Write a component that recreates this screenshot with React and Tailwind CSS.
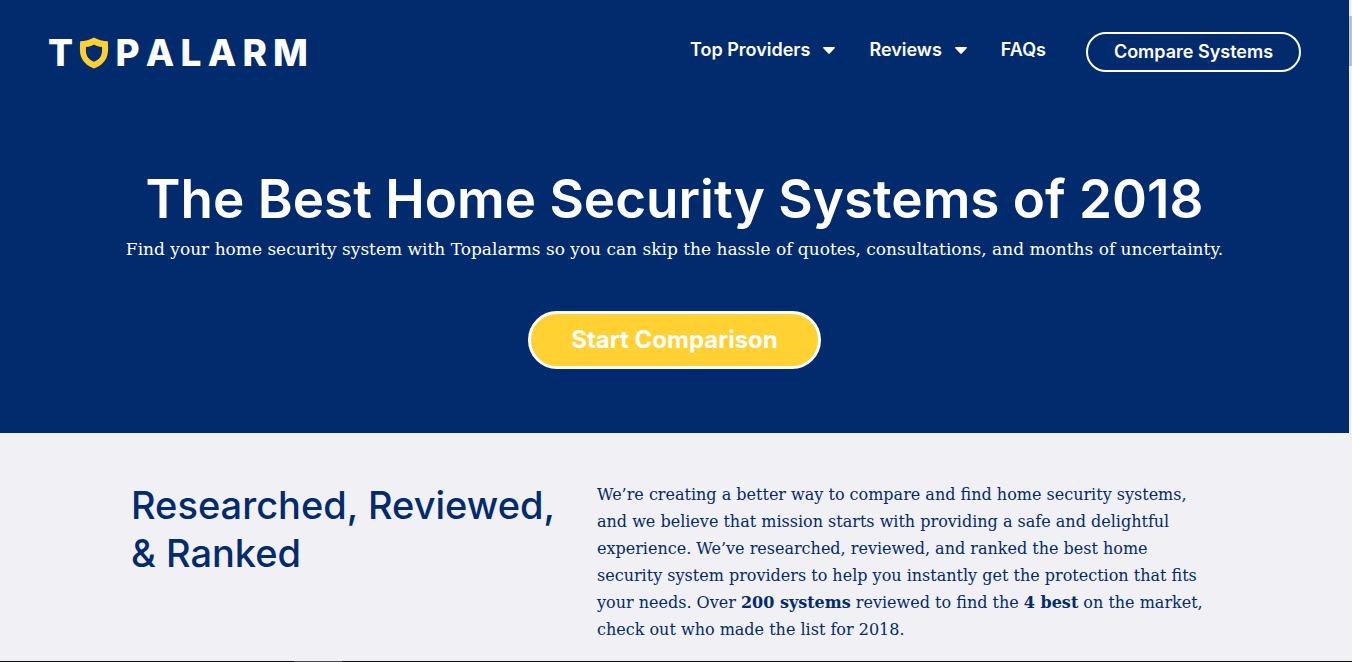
import React from "react";

const navLink =
  "flex items-center gap-[13px] text-[18px] leading-6 font-semibold text-white";

function Caret() {
  return (
    <svg width="12" height="7" viewBox="0 0 12 7" aria-hidden="true">
      <path d="M0.8 0h10.4c.7 0 1 .8.5 1.3L6.7 6.6c-.4.4-1 .4-1.4 0L.3 1.3C-.2.8.1 0 .8 0z" fill="#fff" />
    </svg>
  );
}

function Logo() {
  return (
    <a
      href="#"
      aria-label="Topalarm"
      className="flex w-[260px] items-center justify-between text-[37px] leading-8 font-extrabold text-white"
    >
      <span>T</span>
      <svg width="30" height="32" viewBox="0 0 30 32" aria-hidden="true">
        <path
          fill="#ffd033"
          fillRule="evenodd"
          d="M15 0.5C11 3 6 4 1.2 4.2C0.8 10 0.4 16 2.6 21C5 26 9.500 29.500 15 31.500C20.500 29.500 25 26 27.400 21C29.600 16 29.200 10 28.800 4.200C24 4 19 3 15 0.500ZM15 7.500C17.500 9 20 9.700 23 10C23.200 13.500 23.200 16.500 21.800 19.200C20.400 21.800 18 23.600 15 24.800C12 23.600 9.600 21.800 8.200 19.200C6.800 16.500 6.800 13.500 7 10C10 9.700 12.500 9 15 7.500Z"
        />
      </svg>
      <span>P</span>
      <span>A</span>
      <span>L</span>
      <span>A</span>
      <span>R</span>
      <span>M</span>
    </a>
  );
}

export default function App() {
  return (
    <div className="flex h-screen flex-col overflow-hidden bg-[#f1f0f5] font-[Inter,'Liberation_Sans',sans-serif]">
      <div className="flex min-h-0 grow">
        <div className="min-w-0 grow">
          <div className="bg-[#022b6d] pb-16 text-white">
            <header className="flex items-start justify-between px-12 pt-8">
              <div className="pt-[5px]">
                <Logo />
              </div>
              <nav className="flex items-start">
                <div className="flex gap-[34px] pt-[6px] pr-10">
                  <button className={navLink}>
                    Top Providers <Caret />
                  </button>
                  <button className={navLink}>
                    Reviews <Caret />
                  </button>
                  <a href="#" className={navLink}>
                    FAQs
                  </a>
                </div>
                <a
                  href="#"
                  className="flex h-10 w-[215px] items-center justify-center rounded-full border-2 border-white pb-0.5 text-[18px] font-semibold"
                >
                  Compare Systems
                </a>
              </nav>
            </header>
            <section className="flex flex-col items-center pt-24 text-center">
              <h1 className="text-[53px] leading-[63px] font-semibold whitespace-nowrap">
                The Best Home Security Systems of 2018
              </h1>
              <p className="pt-1 font-['DejaVu_Serif',serif] text-[17px] leading-7 whitespace-nowrap">
                Find your home security system with Topalarms so you can skip the hassle of quotes, consultations, and months of uncertainty.
              </p>
              <button className="mt-12 h-[58px] w-[293px] rounded-full border-3 border-white bg-[#ffd133] text-[24px] font-bold">
                Start Comparison
              </button>
            </section>
          </div>
          <section className="flex gap-9 px-[131px] pt-12 text-[#022b6d]">
            <h2 className="w-[430px] shrink-0 text-[38px] leading-12 font-medium">
              Researched, Reviewed, &amp; Ranked
            </h2>
            <p className="w-[640px] font-['DejaVu_Serif',serif] text-[16px] leading-[27px]">
              We’re creating a better way to compare and find home security systems,
              <br />
              and we believe that mission starts with providing a safe and delightful
              <br />
              experience. We’ve researched, reviewed, and ranked the best home
              <br />
              security system providers to help you instantly get the protection that fits
              <br />
              your needs. Over <b>200 systems</b> reviewed to find the <b>4 best</b> on the market,
              <br />
              check out who made the list for 2018.
            </p>
          </section>
        </div>
        <div className="w-[3px] shrink-0 bg-[#f1f1f1]">
          <div className="mt-4 h-[50px] bg-[#c1c1c1]" />
        </div>
      </div>
      <div className="h-px shrink-0 bg-[#0c0c10] pl-[294px]">
        <div className="h-px w-12 bg-[#4a4a4d]" />
      </div>
    </div>
  );
}
